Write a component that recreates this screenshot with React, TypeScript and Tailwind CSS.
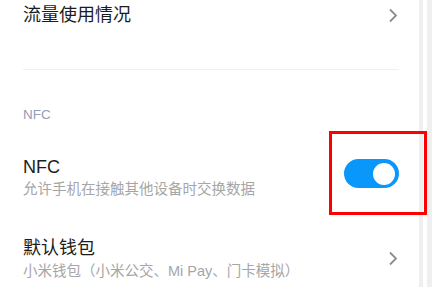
const font = 'font-["Liberation_Sans","Noto_Sans_CJK_SC",sans-serif]';

const Chevron = () => (
  <svg width="10" height="15" viewBox="0 0 10 15" className="mr-px shrink-0">
    <polyline points="2,1.5 8,7.5 2,13.5" fill="none" stroke="#8c8c8c" strokeWidth="1.8" />
  </svg>
);

export default function App() {
  return (
    <div className={`relative flex h-[287px] w-[432px] overflow-hidden bg-white ${font}`}>
      <div className="w-[419px] shrink-0 pl-[23px] pr-[20px]">
        {/* traffic usage */}
        <div className="flex h-[30px] items-center justify-between">
          <span className="text-[18px] leading-[24px] text-[#1c1c1c]">流量使用情况</span>
          <Chevron />
        </div>

        <div className="mt-[39px] h-px bg-[#f0f0f0]" />

        {/* NFC section */}
        <div className="mt-[38px] text-[13.5px] font-medium leading-[13px] text-[#959bb8]">NFC</div>

        <div className="mt-[34px] flex items-start justify-between">
          <div className="flex flex-col">
            <span className="text-[18px] leading-[24px] text-[#1c1c1c]">NFC</span>
            <span className="mt-px text-[14.5px] leading-[18px] text-[#a6a6a6]">允许手机在接触其他设备时交换数据</span>
          </div>
          <div className="mt-[4px] flex h-[29px] w-[55px] items-center justify-end rounded-full bg-[#0a97fb] pr-[4px]">
            <div className="h-[22px] w-[22px] rounded-full bg-white" />
          </div>
        </div>

        <div className="mt-[38px] flex items-center justify-between">
          <div className="flex flex-col">
            <span className="text-[18px] leading-[24px] text-[#1c1c1c]">默认钱包</span>
            <span className="mt-[2px] text-[14.5px] leading-[18px] text-[#a6a6a6]">小米钱包（小米公交、Mi Pay、门卡模拟）</span>
          </div>
          <Chevron />
        </div>
      </div>

      {/* scrollbar strips */}
      <div className="w-[4px] shrink-0 bg-[#efefef]" />
      <div className="w-[4px] shrink-0 bg-white" />
      <div className="flex-1 bg-[#efefef]" />

      {/* highlight box */}
      <div className="absolute left-[329px] top-[131px] h-[84px] w-[98px] border-[3px] border-[#ff0000]" />
    </div>
  );
}
